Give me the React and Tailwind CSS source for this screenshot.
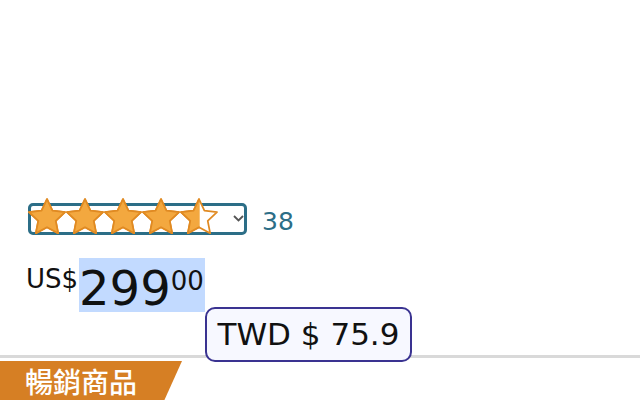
import React from 'react';

const STAR = 'M12 1.6l3.1 6.6 7.2.9-5.3 5 1.4 7.1L12 17.7l-6.4 3.5L7 14.1l-5.3-5 7.2-.9z';

const Star = ({ half }) => (
  <svg width="38" height="36" viewBox="1.2 1 21.6 20.6" className="shrink-0">
    <defs>
      <clipPath id="halfclip">
        <rect x="0" y="0" width="12.4" height="23" />
      </clipPath>
    </defs>
    <path d={STAR} fill="#fff" stroke="#e08a22" strokeWidth="1" strokeLinejoin="round" />
    <path
      d={STAR}
      fill="#f3a83f"
      stroke="#e08a22"
      strokeWidth="1"
      strokeLinejoin="round"
      clipPath={half ? 'url(#halfclip)' : undefined}
    />
  </svg>
);

const App = () => {
  return (
    <div
      className="relative w-[640px] h-[400px] overflow-hidden bg-white"
      style={{ fontFamily: '"DejaVu Sans", "Noto Sans CJK TC", sans-serif' }}
    >
      <div className="pt-[203px] pl-[28px] flex items-center gap-[15px]">
        <div className="w-[219px] h-[32px] border-[3px] border-[#2c6e87] rounded-[5px] flex items-center">
          <div className="flex shrink-0 -ml-[3px] -mt-[6px]">
            <Star />
            <Star />
            <Star />
            <Star />
            <Star half />
          </div>
          <svg width="11" height="9" viewBox="0 0 11 9" className="shrink-0 ml-[15px] -mt-[1px]">
            <path d="M1 2l4.5 4.5L10 2" fill="none" stroke="#555" strokeWidth="1.8" />
          </svg>
        </div>
        <span className="text-[25px] leading-none text-[#2c6e87] mt-[4px]">38</span>
      </div>

      <div className="mt-[23px] pl-[26px] flex items-start">
        <span className="text-[26px] leading-none text-[#111] mt-[8px]">US$</span>
        <span className="ml-[1px] h-[54px] bg-[#c2daff] flex items-start pr-[1px]">
          <span className="text-[48px] leading-[54px] text-[#0f1111] pt-[3px]">299</span>
          <span className="text-[26px] leading-none text-[#111] mt-[10px]">00</span>
        </span>
      </div>

      <div className="mt-[43px] border-t-[3px] border-[#d9d9d9]" />

      <div className="mt-[3px] w-[182px] h-[40px] bg-[#d67f24] [clip-path:polygon(0_0,100%_0,calc(100%-18px)_100%,0_100%)] pl-[25px] pt-[9px]">
        <span className="text-[28px] leading-none text-white font-medium">暢銷商品</span>
      </div>

      <div className="absolute left-[205px] top-[307px] w-[207px] h-[55px] rounded-[10px] border-2 border-[#3a3391] bg-[#f7f8ff] flex items-center justify-center">
        <span className="text-[31px] leading-none text-[#111]">TWD $ 75.9</span>
      </div>
    </div>
  );
};

export default App;
